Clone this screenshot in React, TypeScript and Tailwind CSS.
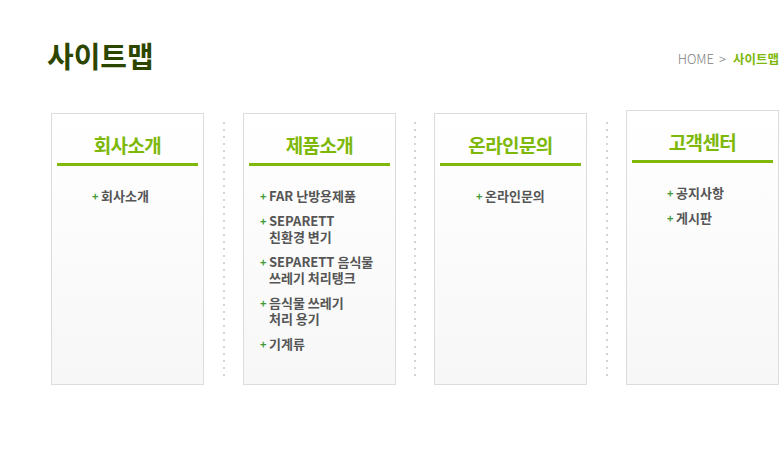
import React from "react";

const font = { fontFamily: '"Noto Sans CJK KR", "Noto Sans", sans-serif' };

type Item = string[];
type Box = { title: string; items: Item[]; pl: string; shift?: boolean };

const boxes: Box[] = [
  { title: "회사소개", items: [["회사소개"]], pl: "pl-[35px]" },
  {
    title: "제품소개",
    items: [
      ["FAR 난방용제품"],
      ["SEPARETT", "친환경 변기"],
      ["SEPARETT 음식물", "쓰레기 처리탱크"],
      ["음식물 쓰레기", "처리 용기"],
      ["기계류"],
    ],
    pl: "pl-[11px]",
  },
  { title: "온라인문의", items: [["온라인문의"]], pl: "pl-[36px]" },
  { title: "고객센터", items: [["공지사항"], ["게시판"]], pl: "pl-[35px]", shift: true },
];

function Separator({ w }: { w: string }) {
  return (
    <div className={`${w} self-stretch flex justify-center pt-[12px] pb-[9px]`}>
      <div className="w-[2px] h-full bg-[linear-gradient(#d4d4d4_2px,transparent_2px)] bg-[length:2px_7px]" />
    </div>
  );
}

function Card({ box }: { box: Box }) {
  return (
    <div
      className={`w-[153px] ${box.shift ? "h-[275px]" : "h-[272px] mt-[3px]"} border border-[#dcdcdc] bg-[linear-gradient(#ffffff,#f7f7f7)] flex flex-col px-[5px]`}
    >
      <div className="h-[49px] flex items-end justify-center pb-[6px]">
        <span className="text-[19px] leading-[24px] font-bold text-[#7db80a] tracking-[-0.6px]">{box.title}</span>
      </div>
      <div className="h-[3px] bg-[#80b90a]" />
      <ul className={`mt-[22px] flex flex-col gap-[9px] ${box.pl} pr-1`}>
        {box.items.map((lines, i) => (
          <li key={i} className="flex text-[13px] leading-[16px] font-bold text-[#555555]">
            <span className="w-[9px] text-[#3f9a35] text-[11px] shrink-0">+</span>
            <span className="whitespace-nowrap">
              {lines.map((l, j) => (
                <React.Fragment key={j}>
                  {j > 0 && <br />}
                  {l}
                </React.Fragment>
              ))}
            </span>
          </li>
        ))}
      </ul>
    </div>
  );
}

export default function App() {
  return (
    <div className="w-[780px] h-[476px] bg-white overflow-hidden" style={font}>
      <div className="flex items-start justify-between pl-[47px] pr-[1px] pt-[37px] h-[110px]">
        <h1 className="text-[29px] leading-[36px] font-bold text-[#2c4600]">사이트맵</h1>
        <div className="flex items-center mt-[14px] whitespace-nowrap">
          <span className="text-[13px] leading-[16px] text-[#808080] font-light">HOME</span>
          <span className="text-[13px] leading-[16px] text-[#808080] font-light ml-[5px] mr-[7px]">&gt;</span>
          <span className="text-[12.5px] leading-[16px] font-bold text-[#7db80a]">사이트맵</span>
        </div>
      </div>
      <div className="flex items-start pl-[51px]">
        <Card box={boxes[0]} />
        <Separator w="w-[39px]" />
        <Card box={boxes[1]} />
        <Separator w="w-[38px]" />
        <Card box={boxes[2]} />
        <Separator w="w-[39px]" />
        <Card box={boxes[3]} />
      </div>
    </div>
  );
}
